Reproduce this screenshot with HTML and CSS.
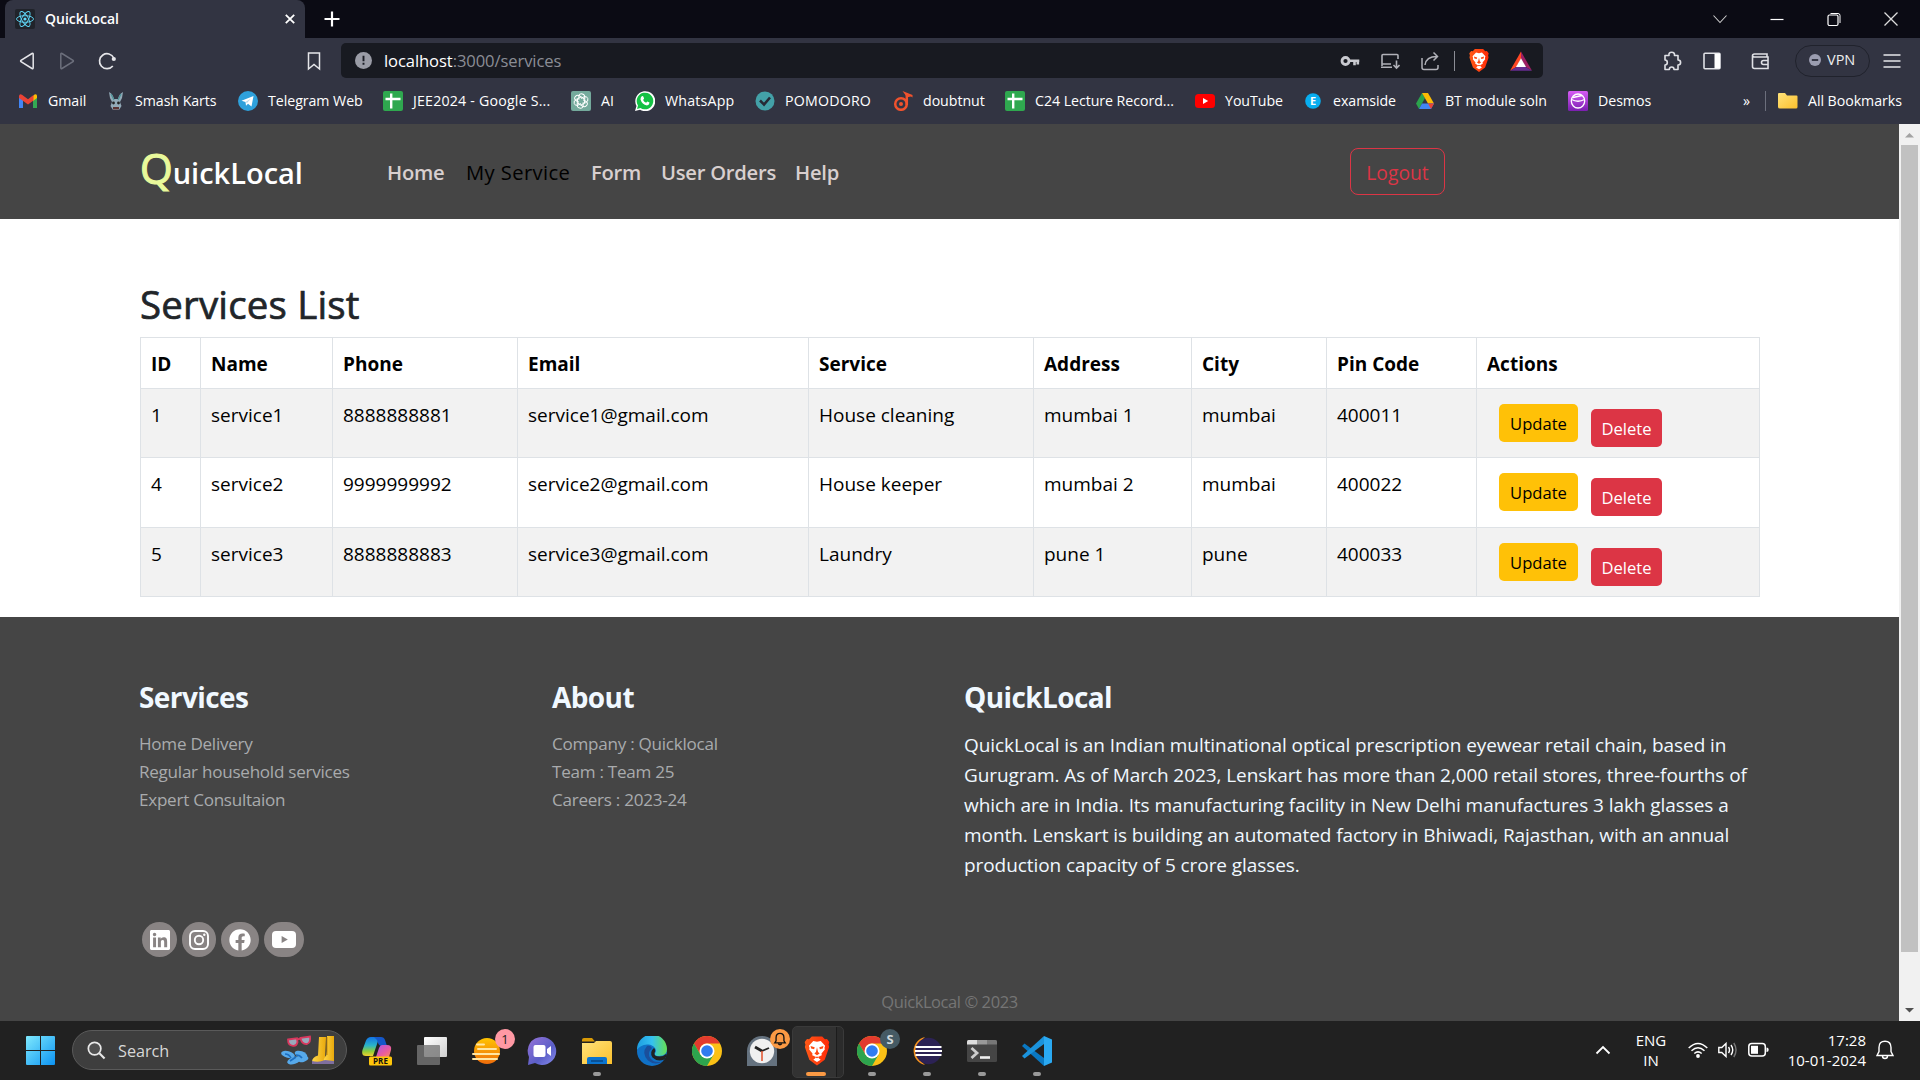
FILE: index.html
```html
<!DOCTYPE html>
<html lang="en">
<head>
<meta charset="utf-8">
<title>QuickLocal</title>
<link rel="stylesheet" href="styles.css">
</head>
<body>
<svg width="0" height="0" class="defs" aria-hidden="true">
  <defs>
    <linearGradient id="g-win" x1="0" y1="0" x2="1" y2="1"><stop offset="0" stop-color="#7fe9fd"/><stop offset="1" stop-color="#0c93f2"/></linearGradient>
    <linearGradient id="g-fold" x1="0" y1="0" x2="1" y2="1"><stop offset="0" stop-color="#ffe27a"/><stop offset="1" stop-color="#fbc02d"/></linearGradient>
    <linearGradient id="g-desmos" x1="0" y1="0" x2="0" y2="1"><stop offset="0" stop-color="#d75cf5"/><stop offset="1" stop-color="#7a1fb0"/></linearGradient>
    <linearGradient id="g-brave" x1="0" y1="0" x2="1" y2="0"><stop offset="0" stop-color="#ff5a18"/><stop offset="1" stop-color="#ff2a08"/></linearGradient>
    <linearGradient id="g-chat" x1="0" y1="0" x2="1" y2="1"><stop offset="0" stop-color="#9673d8"/><stop offset=".6" stop-color="#5b5fc7"/><stop offset="1" stop-color="#8a8ef0"/></linearGradient>
    <linearGradient id="g-sun" x1="0" y1="0" x2="0" y2="1"><stop offset="0" stop-color="#ffc400"/><stop offset="1" stop-color="#ee6c0b"/></linearGradient>
    <linearGradient id="g-edge" x1="0" y1="0" x2="1" y2="0"><stop offset="0" stop-color="#1d9de0"/><stop offset=".5" stop-color="#35c1f1"/><stop offset="1" stop-color="#66e052"/></linearGradient>
    <linearGradient id="g-cop1" x1="0" y1="0" x2="0" y2="1"><stop offset="0" stop-color="#1273e6"/><stop offset=".45" stop-color="#2bb4c8"/><stop offset=".75" stop-color="#8fce3a"/><stop offset="1" stop-color="#f3d130"/></linearGradient>
    <linearGradient id="g-cop2" x1="0" y1="0" x2="1" y2="1"><stop offset="0" stop-color="#a556ee"/><stop offset=".6" stop-color="#ea5c9c"/><stop offset="1" stop-color="#f98a5a"/></linearGradient>
    <linearGradient id="g-task" x1="0" y1="0" x2="1" y2="1"><stop offset="0" stop-color="#ffffff"/><stop offset="1" stop-color="#cfcfcf"/></linearGradient>
    <linearGradient id="g-boot" x1="0" y1="0" x2="1" y2="0"><stop offset="0" stop-color="#ffd84a"/><stop offset="1" stop-color="#e9a90c"/></linearGradient>
    <symbol id="i-sheet" viewBox="0 0 20 20"><rect width="20" height="20" rx="2" fill="#2fa84f"/><path d="M8.2 2.5v15M2.5 8h15" stroke="#fff" stroke-width="2.4" fill="none"/></symbol>
    <symbol id="i-chrome" viewBox="0 0 30 30">
      <circle cx="15" cy="15" r="15" fill="#fbc116"/>
      <path d="M1.900 7.700A15 15 0 0 1 28 7.500H15A7.500 7.500 0 0 0 8.300 11.600L8 17.500z" fill="#e33b2e"/>
      <path d="M2 7.500A15 15 0 0 0 15 30L21.500 18.800H8.500z" fill="#2da44e"/>
      <circle cx="15" cy="15" r="7.500" fill="#fff"/><circle cx="15" cy="15" r="5.800" fill="#2f7cf0"/>
    </symbol>
    <symbol id="i-brave" viewBox="0 0 24 28">
      <path d="M7 0h10l2.600 2.700 2-.3L24 5.500l-.9 2.200.6 2.500-4.300 12.200L12 28l-7.400-5.600L.3 10.200l.6-2.500L0 5.500l2.400-3.100 2 .3z" fill="url(#g-brave)"/>
      <path d="M12 5.200l3.600-.9 4.200 4.600-.6 2 .3 1.700-3.200 3.700.3 1.800-2.200 1-1.200 1.300 2.300 2L12 24.500 8.500 22.400l2.300-2-1.200-1.300-2.200-1 .3-1.800-3.200-3.700.3-1.700-.6-2 4.200-4.600z" fill="#fff"/>
      <path d="M5.800 9.200l4 1.200-.6 1.800-2.800-.6zM18.200 9.200l-4 1.200.6 1.800 2.800-.6zM12 10.500l1 4.500 1.500 1.500L12 18l-2.500-1.500L11 15zM9.500 19.500h5L12 21z" fill="#ff4a12"/>
    </symbol>
  </defs>
</svg>

<header class="tabstrip">
  <div class="tab">
    <svg class="fav" viewBox="0 0 20 20"><rect width="20" height="20" rx="2" fill="#20232a"/><g fill="none" stroke="#61dafb" stroke-width=".9"><ellipse cx="10" cy="10" rx="8.500" ry="3.300"/><ellipse cx="10" cy="10" rx="8.500" ry="3.300" transform="rotate(60 10 10)"/><ellipse cx="10" cy="10" rx="8.500" ry="3.300" transform="rotate(120 10 10)"/></g><circle cx="10" cy="10" r="1.600" fill="#61dafb"/></svg>
    <span class="tab-title">QuickLocal</span>
    <svg class="tab-close" viewBox="0 0 10 10"><path d="M.8.800l8.400 8.400M9.200.8.800 9.200" stroke="#fff" stroke-width="1.800"/></svg>
  </div>
  <svg class="new-tab" viewBox="0 0 16 16"><path d="M8 .5v15M.5 8h15" stroke="#fff" stroke-width="2.200"/></svg>
  <div class="win-controls">
    <svg viewBox="0 0 16 16"><path d="M1.500 4.500 8 11.500l6.500-7" fill="none" stroke="#ccc" stroke-width="1.100"/></svg>
    <svg viewBox="0 0 16 16"><path d="M1.500 8.500h13" stroke="#fff" stroke-width="1.200"/></svg>
    <svg viewBox="0 0 16 16"><rect x="2" y="4" width="10" height="10.500" rx="1.500" fill="none" stroke="#fff" stroke-width="1.200"/><path d="M4.500 2.500H12q2 0 2 2V12" fill="none" stroke="#fff"/></svg>
    <svg viewBox="0 0 16 16"><path d="M1.500 1.500l13 13M14.500 1.500l-13 13" stroke="#ddd" stroke-width="1.300"/></svg>
  </div>
</header>

<nav class="toolbar">
  <svg class="tb" viewBox="0 0 20 20"><path d="M15 2.500q1.200-.6 1.200.9v13.200q0 1.500-1.200.9L4 10.700q-.8-.7 0-1.400z" fill="none" stroke="#e6e6ea" stroke-width="1.500"/></svg>
  <svg class="tb" viewBox="0 0 20 20"><path d="M5 2.500q-1.200-.6-1.200.9v13.200q0 1.500 1.200.9L16 10.700q.8-.7 0-1.400z" fill="none" stroke="#6c6f7c" stroke-width="1.500"/></svg>
  <svg class="tb" viewBox="0 0 20 20"><path d="M15.800 15A7.500 7.500 0 1 1 16.800 7" fill="none" stroke="#e6e6ea" stroke-width="1.700"/><circle cx="16.800" cy="8" r="2.100" fill="#e6e6ea"/></svg>
  <svg class="tb save" viewBox="0 0 20 20"><path d="M4.500 2h11v16L10 13.500 4.500 18z" fill="none" stroke="#e6e6ea" stroke-width="1.500"/></svg>
  <div class="urlbar">
    <svg class="info" viewBox="0 0 17 17"><circle cx="8.500" cy="8.500" r="8.500" fill="#9a9ca6"/><path d="M8.500 3.800v5.400M8.500 10.800v2" stroke="#1a1c24" stroke-width="1.900"/></svg>
    <span class="url"><b>localhost</b>:3000/services</span>
    <svg class="u" viewBox="0 0 20 20"><circle cx="5.500" cy="10" r="3.500" fill="none" stroke="#c9cad0" stroke-width="2.800"/><path d="M9 9.800h10.300M14.500 10v4.200M17.800 10v3.500" stroke="#c9cad0" stroke-width="2.600"/></svg>
    <svg class="u" viewBox="0 0 20 20"><path d="M18 8V4.500q0-1-1-1H3q-1 0-1 1v10.500M1 16.300h11M2 13h9" fill="none" stroke="#b0b1b8" stroke-width="1.600"/><path d="M16.500 9.500v7M13.500 14l3 3 3-3" fill="none" stroke="#b0b1b8" stroke-width="1.600"/></svg>
    <svg class="u" viewBox="0 0 20 20"><path d="M2 7v9.500q0 2 2 2h12q2 0 2-2V14M5 14q1-8.500 12-8.500M13.500 1.500l4 4-4 4" fill="none" stroke="#b0b1b8" stroke-width="1.500"/></svg>
    <i class="vsep"></i>
    <svg class="lion" viewBox="0 0 24 28"><use href="#i-brave"/></svg>
    <svg class="bat" viewBox="0 0 24 21"><path d="M12 0 0 21l7-4L12 8z" fill="#ff4724"/><path d="M12 0l12 21-7-4-5-9z" fill="#9e1f63"/><path d="M0 21h24l-7-4H7z" fill="#662d91"/><path d="M12 7.500 17.500 17h-11z" fill="#fff"/></svg>
  </div>
  <svg class="tb puzzle" viewBox="0 0 20 20"><path d="M3 4.500h4q-.5-3.200 2.700-3.200T12.500 4.500H16V9q2.600 0 2.600 2.500T16 14v4.500h-4q0-2.500-2.300-2.500T7.300 18.500H3V14q2.300 0 2.300-2.500T3 9z" fill="none" stroke="#dfe0e5" stroke-width="1.600" stroke-linejoin="round"/></svg>
  <svg class="tb side" viewBox="0 0 20 20"><rect x="2" y="2.300" width="16" height="15.400" rx="1" fill="none" stroke="#dfe0e5" stroke-width="1.600"/><path d="M12.500 2.500H18v15h-5.500z" fill="#fff"/></svg>
  <svg class="tb wallet" viewBox="0 0 20 20"><path d="M17 6V3H4.500Q2.500 3 2.500 4.700V15.500q0 2 2 2H18V6H4.500q-2 0-2-1.500M18 9.500h-4.500q-2 0-2 2t2 2H18" fill="none" stroke="#dfe0e5" stroke-width="1.600"/></svg>
  <div class="vpn"><svg viewBox="0 0 12 12"><circle cx="6" cy="6" r="6" fill="#9b9db0"/><path d="M2.800 6h6.400" stroke="#2b2d3a" stroke-width="1.800"/></svg><span>VPN</span></div>
  <svg class="tb menu" viewBox="0 0 20 20"><path d="M1.500 4h17M1.500 10h17M1.500 16h17" stroke="#e6e6ea" stroke-width="1.500"/></svg>
</nav>

<nav class="bookmarks">
  <a><svg viewBox="0 0 20 20"><path d="M1 4.500V17h4V8.500z" fill="#4285f4"/><path d="M19 4.500V17h-4V8.500z" fill="#34a853"/><path d="M15 5v5l4-3V5q0-2.500-2.500-1.500z" fill="#fbbc04"/><path d="M1 5q.5-2.500 3-1.200l6 4.500 5.500-4.300v5.500L10 13.500 1 7z" fill="#ea4335"/></svg><span>Gmail</span></a>
  <a><svg viewBox="0 0 20 20"><path d="M3 1q4 2 5 7h4q1-5 5-7l-1 6-2 4 1.500 4-2.500 4H7l-2.500-4L6 11 4 7z" fill="#93aab8"/><path d="M5 3l3 6M15 3l-3 6" stroke="#4c9399" stroke-width="1.200"/><circle cx="7.500" cy="12" r="1.400" fill="#222"/><circle cx="12.500" cy="12" r="1.400" fill="#222"/><path d="M7 16h6v2.500H7z" fill="#5b3434"/></svg><span>Smash Karts</span></a>
  <a><svg viewBox="0 0 20 20"><circle cx="10" cy="10" r="10" fill="#2ea1dc"/><path d="M3.500 9.800 15.500 5l-2 10.500-3.500-2.700-2 2L7.500 11z" fill="#fff"/><path d="M7.500 11 13 7.500 9 12z" fill="#b9d9ea"/></svg><span>Telegram Web</span></a>
  <a class="wide"><svg viewBox="0 0 20 20"><use href="#i-sheet"/></svg><span>JEE2024 - Google S...</span></a>
  <a><svg viewBox="0 0 20 20"><rect width="20" height="20" rx="2" fill="#74aa9c"/><g fill="none" stroke="#fff" stroke-width="1"><path id="petal" d="M10 7.500 13 5.800q3-1 3.800 1.800t-2 4L10 14"/><use href="#petal" transform="rotate(60 10 10)"/><use href="#petal" transform="rotate(120 10 10)"/><use href="#petal" transform="rotate(180 10 10)"/><use href="#petal" transform="rotate(240 10 10)"/><use href="#petal" transform="rotate(300 10 10)"/></g></svg><span>AI</span></a>
  <a class="wide"><svg viewBox="0 0 20 20"><path d="M0 20l1.500-5A10 10 0 1 1 5 18.700z" fill="#fff"/><path d="M2 18l1-3.500A8.300 8.300 0 1 1 5.500 17z" fill="#14c144"/><path d="M6.500 5.500q1.500-1 2 .5l.6 1.500-1 1.500q1 2 3 2.800l1.200-1.200 2.200 1q0 2.500-2.500 2.800Q7 13.500 5.500 8.500 5.500 6.500 6.500 5.500z" fill="#fff"/></svg><span>WhatsApp</span></a>
  <a class="wide"><svg viewBox="0 0 20 20"><circle cx="10" cy="10" r="9.500" fill="#43a1a8"/><path d="M5 9.500l4 4 6-7" fill="none" stroke="#262a36" stroke-width="2.600"/></svg><span>POMODORO</span></a>
  <a><svg viewBox="0 0 20 20"><circle cx="8" cy="13" r="5.800" fill="none" stroke="#f0522d" stroke-width="2.500"/><circle cx="8" cy="13" r="2" fill="#f0522d"/><path d="M13.800 14V2.500" stroke="#f0522d" stroke-width="2.500"/><path d="M9.500 0l10 4v2.500l-1.500-1-4 .8z" fill="#f0522d"/></svg><span>doubtnut</span></a>
  <a><svg viewBox="0 0 20 20"><use href="#i-sheet"/></svg><span>C24 Lecture Record...</span></a>
  <a><svg viewBox="0 0 20 20"><rect y="3" width="20" height="14" rx="3.500" fill="#f00"/><path d="M8 7l5.200 3L8 13z" fill="#fff"/></svg><span>YouTube</span></a>
  <a><svg viewBox="0 0 20 20"><circle cx="10" cy="10" r="7.800" fill="#08aef0"/><text x="10" y="14" text-anchor="middle" class="ic-e">E</text></svg><span>examside</span></a>
  <a><svg viewBox="0 0 20 20"><path d="M7 2 1 12.500 4 18l6-11z" fill="#2ba24c"/><path d="M7 2h6l6 10.500h-6z" fill="#fbbc04"/><path d="M4 18h12l3-5.500H7z" fill="#4285f4"/><path d="M16 18l3-5.500h-6z" fill="#ea4335"/></svg><span>BT module soln</span></a>
  <a><svg viewBox="0 0 20 20"><rect width="20" height="20" rx="1.500" fill="url(#g-desmos)"/><g fill="none" stroke="#fff" stroke-width="1.300"><ellipse cx="10" cy="10" rx="6.700" ry="7"/><path d="M3.500 8.500q6.500 3.500 13 0M5 6.500 14 4.500"/></g></svg><span>Desmos</span></a>
  <em class="more">»</em>
  <a class="all"><svg viewBox="0 0 20 20"><path d="M0 3q0-1 1-1h6l2 2.500h9.500q1 0 1 1V16q0 1.500-1.500 1.500H2Q0 17.500 0 16z" fill="url(#g-fold)"/></svg><span>All Bookmarks</span></a>
</nav>

<div class="viewport">
  <div class="page">
    <header class="site-head">
      <a class="logo"><b>Q</b>uickLocal</a>
      <nav class="links"><a>Home</a><a class="active">My Service</a><a>Form</a><a>User Orders</a><a>Help</a></nav>
      <button class="logout">Logout</button>
    </header>
    <main class="content">
      <h1>Services List</h1>
      <table>
        <colgroup><col class="c1"><col class="c2"><col class="c3"><col class="c4"><col class="c5"><col class="c6"><col class="c7"><col class="c8"><col class="c9"></colgroup>
        <thead><tr><th>ID</th><th>Name</th><th>Phone</th><th>Email</th><th>Service</th><th>Address</th><th>City</th><th>Pin Code</th><th>Actions</th></tr></thead>
        <tbody>
          <tr><td>1</td><td>service1</td><td>8888888881</td><td>service1@gmail.com</td><td>House cleaning</td><td>mumbai 1</td><td>mumbai</td><td>400011</td><td><div class="acts"><button class="upd">Update</button><button class="del">Delete</button></div></td></tr>
          <tr><td>4</td><td>service2</td><td>9999999992</td><td>service2@gmail.com</td><td>House keeper</td><td>mumbai 2</td><td>mumbai</td><td>400022</td><td><div class="acts"><button class="upd">Update</button><button class="del">Delete</button></div></td></tr>
          <tr><td>5</td><td>service3</td><td>8888888883</td><td>service3@gmail.com</td><td>Laundry</td><td>pune 1</td><td>pune</td><td>400033</td><td><div class="acts"><button class="upd">Update</button><button class="del">Delete</button></div></td></tr>
        </tbody>
      </table>
    </main>
    <footer class="site-foot">
      <div class="cols">
        <section><h3>Services</h3><ul><li>Home Delivery</li><li>Regular household services</li><li>Expert Consultaion</li></ul></section>
        <section><h3>About</h3><ul><li>Company : Quicklocal</li><li>Team : Team 25</li><li>Careers : 2023-24</li></ul></section>
        <section><h3>QuickLocal</h3><p>QuickLocal is an Indian multinational optical prescription eyewear retail chain, based in<br>Gurugram. As of March 2023, Lenskart has more than 2,000 retail stores, three-fourths of<br>which are in India. Its manufacturing facility in New Delhi manufactures 3 lakh glasses a<br>month. Lenskart is building an automated factory in Bhiwadi, Rajasthan, with an annual<br>production capacity of 5 crore glasses.</p></section>
      </div>
      <div class="social">
        <a class="s1"><svg viewBox="0 32 448 448"><path fill="#fff" d="M416 32H31.900C14.300 32 0 46.500 0 64.300v383.400C0 465.500 14.300 480 31.900 480H416c17.600 0 32-14.500 32-32.300V64.300c0-17.800-14.400-32.300-32-32.300zM135.400 416H69V202.200h66.500V416zm-33.200-243c-21.300 0-38.500-17.300-38.500-38.500S80.900 96 102.200 96c21.200 0 38.500 17.300 38.500 38.500 0 21.300-17.200 38.500-38.500 38.500zm282.100 243h-66.400V312c0-24.800-.5-56.700-34.500-56.700-34.600 0-39.900 27-39.900 54.900V416h-66.400V202.200h63.700v29.200h.9c8.900-16.800 30.600-34.500 62.900-34.500 67.200 0 79.700 44.300 79.700 101.900V416z"/></svg></a>
        <a class="s2"><svg viewBox="0 0 20 20"><rect x="1" y="1" width="18" height="18" rx="5" fill="none" stroke="#fff" stroke-width="1.900"/><circle cx="10" cy="10" r="4.200" fill="none" stroke="#fff" stroke-width="1.900"/><circle cx="15.300" cy="4.800" r="1.200" fill="#fff"/></svg></a>
        <a class="s3"><svg viewBox="0 0 512 512"><path fill="#fff" d="M504 256C504 119 393 8 256 8S8 119 8 256c0 123.800 90.700 226.400 209.200 245V327.700h-63V256h63v-54.600c0-62.200 37-96.500 93.700-96.500 27.100 0 55.500 4.800 55.500 4.800v61h-31.300c-30.800 0-40.400 19.100-40.400 38.700V256h68.800l-11 71.700h-57.800V501C413.300 482.400 504 379.800 504 256z"/></svg></a>
        <a class="s4"><svg viewBox="0 0 24 17"><rect width="24" height="17" rx="4" fill="#fff"/><path d="M9.600 5l6.200 3.500L9.600 12z" fill="#898484"/></svg></a>
      </div>
      <div class="copy">QuickLocal © 2023</div>
    </footer>
  </div>
  <div class="scroll">
    <svg viewBox="0 0 21 21"><path d="M6 13.500h9L10.500 9z" fill="#a3a3a3"/></svg>
    <i class="thumb"></i>
    <svg viewBox="0 0 21 21"><path d="M6 8h9l-4.500 4.500z" fill="#505050"/></svg>
  </div>
</div>

<footer class="taskbar">
  <svg class="start" viewBox="0 0 29 29"><path d="M0 1q0-1 1-1h13v14H0zM15 0h13q1 0 1 1v13H15zM0 15h14v14H1q-1 0-1-1zM15 15h14v13q0 1-1 1H15z" fill="url(#g-win)"/></svg>
  <div class="search">
    <svg class="mag" viewBox="0 0 20 20"><circle cx="8" cy="8" r="6.600" fill="#505050" stroke="#e8e8e8" stroke-width="1.800"/><path d="M13 13l5.500 5.500" stroke="#e8e8e8" stroke-width="2.200"/></svg>
    <span>Search</span>
    <svg class="art" viewBox="0 0 54 30">
      <g stroke="#d9385e" stroke-width="1.800"><path d="M7 4.500l9-1.200.5 4q-1 4-4.500 3.500Q7 10.500 7 4.500zM19.500 2.800 29 1.500q1 6-3 7.500-5.500.5-6.500-6.200z" fill="#9aa9bb"/><path d="M15.500 4.500 20 3.700" /></g>
      <g fill="#57a9ea"><ellipse cx="7" cy="19.500" rx="7" ry="3.300" transform="rotate(14 7 19.500)"/><ellipse cx="20" cy="19.500" rx="6.500" ry="3.300" transform="rotate(18 20 19.500)"/><ellipse cx="13" cy="25.500" rx="7" ry="3.500" transform="rotate(-18 13 25.500)"/><ellipse cx="22" cy="24" rx="5.500" ry="3" transform="rotate(-14 22 24)"/></g>
      <path d="M4 19q4 0 6 4M15 20q4 0 6 3M9 26l6-4" stroke="#1c6ec0" stroke-width="1.600" fill="none"/>
      <path d="M38 2h7l-1 23q-6 4-13 2 0-5 6-6.500z" fill="url(#g-boot)"/><path d="M46 1h7v26h-9q-3 0 0-5 2-2 2-6z" fill="url(#g-boot)"/><path d="M31 26q7 2 13-1l9 1v3H31z" fill="#7f6f9f"/><path d="M46 2v18" stroke="#c98a05"/>
    </svg>
  </div>
  <div class="apps">
    <a><svg viewBox="0 0 30 30"><path d="M9 1h10l-3 4-5 15H4Q-1 20 .5 14L4 4.500Q5.500 1 9 1z" fill="url(#g-cop1)"/><path d="M12 1h7q3 0 4 3l2 6h-5q-3 0-4-3-1-4-4-6z" fill="#1557c8"/><path d="M20 9h5q5 0 4 5l-2 7H14l3-9q1-3 3-3z" fill="url(#g-cop2)"/><rect x="7" y="20.500" width="23" height="9" rx="1.500" fill="#ffc60a"/><text x="18.500" y="28" text-anchor="middle" class="ic-pre">PRE</text></svg></a>
    <a><svg viewBox="0 0 30 30"><rect x="7" y="1" width="23" height="20" rx="1" fill="url(#g-task)"/><rect x="0" y="9" width="23" height="20" rx="1" fill="#777" fill-opacity=".8"/></svg></a>
    <a><svg viewBox="0 0 30 30"><circle cx="15" cy="15" r="13" fill="url(#g-sun)"/><path d="M5 8.500h7M6 13h18M1 18h14M10 18h17M1 23h24" stroke="#ffe6a3" stroke-width="2" stroke-linecap="round"/></svg><b class="badge pink">1</b></a>
    <a><svg viewBox="0 0 30 30"><path d="M15 1a14 14 0 1 1-7 26L1 29l1-8A14 14 0 0 1 15 1z" fill="url(#g-chat)"/><rect x="6.500" y="9" width="12" height="12" rx="2" fill="#fff"/><path d="M20 13l4-3v10l-4-3z" fill="#fff"/></svg></a>
    <a><svg viewBox="0 0 30 30"><path d="M0 4q0-2 2-2h8l3 3.500H0z" fill="#d99a06"/><path d="M0 7h12l2-2h14q2 0 2 2v21H0z" fill="url(#g-fold)"/><path d="M5 28v-5q0-2 2-2h16q2 0 2 2v5z" fill="#0b74cf"/><path d="M9 25h12" stroke="#08427e" stroke-width="1.400"/></svg><i class="dot"></i></a>
    <a><svg viewBox="0 0 30 30"><circle cx="15" cy="15" r="15" fill="#1071c6"/><path d="M0 14A15 15 0 0 1 30 13q0 7-8 7-5 0-4-3 2-2 0-5-3-4-8-3.500Q3 9 0 14z" fill="url(#g-edge)"/><path d="M10 10q-6 7 1 14.500Q18 30 25.500 25.500q-8 2-12-3T15 12q-2-3-5-2z" fill="#1a4f9c"/><path d="M17 12q2 2 .5 5-.8 3.500 5 3.500 4 0 6.500-2.500l1 1-2.500 4.500Q20 26 15.500 21.500 12 16 17 12z" fill="#212121"/></svg></a>
    <a><svg viewBox="0 0 30 30"><use href="#i-chrome"/></svg></a>
    <a><svg viewBox="0 0 30 30"><path d="M0 30V15A15 15 0 0 1 30 15v15z" fill="#65727f"/><circle cx="15" cy="15" r="12.200" fill="#f0f0f0"/><path d="M15 15 8 11" stroke="#222" stroke-width="2.800"/><path d="M15 15l7-3" stroke="#222" stroke-width="1.800"/><path d="M15 15v10" stroke="#e2502a" stroke-width="1.500"/></svg><b class="badge orange"><svg viewBox="0 0 16 16"><path d="M8 1.500q4.500 0 4.500 5V10l1.500 2.500H2L3.500 10V6.500q0-5 4.500-5zM6 13.500q2 2 4 0" fill="none" stroke="#111" stroke-width="1.500"/></svg></b></a>
    <a class="on"><svg viewBox="0 0 30 30"><use href="#i-brave" x="2.500" y="0" width="25" height="30"/></svg><i class="dot wide"></i></a>
    <a><svg viewBox="0 0 30 30"><use href="#i-chrome"/></svg><b class="badge slate">S</b><i class="dot"></i></a>
    <a><svg viewBox="0 0 30 30"><path d="M13 1A14.300 14.300 0 0 0 13 29L8 24Q3 15 8 6z" fill="#f7941e"/><circle cx="16.500" cy="15" r="13.200" fill="#2c2255"/><path d="M3.500 11h26M3 15h27M3.500 19h26" stroke="#fff" stroke-width="2"/></svg><i class="dot"></i></a>
    <a><svg viewBox="0 0 30 30"><rect y="4" width="30" height="22" rx="1.500" fill="#454545"/><path d="M0 8.500V5.500Q0 4 1.500 4H10v4.500z" fill="#ddd"/><path d="M10 4h10v4.500H10z" fill="#999"/><path d="M20 4h8.500Q30 4 30 5.500v3H20z" fill="#777"/><path d="M4.500 12l5.500 5-5.500 5" fill="none" stroke="#ccc" stroke-width="2.800"/><path d="M13 21.500h10" stroke="#f0f0f0" stroke-width="2.600"/></svg><i class="dot"></i></a>
    <a><svg viewBox="0 0 30 30"><path d="M0 10l2.500-2.500L22 22v8z" fill="#0a78c2"/><path d="M0 20l2.500 2.500L22 8V0z" fill="#1b93dc"/><path d="M22 0l8 3.500v23L22 30z" fill="#2aa9f2"/></svg><i class="dot"></i></a>
  </div>
  <div class="tray">
    <svg class="up" viewBox="0 0 16 16"><path d="M1.500 11.500 8 5l6.500 6.500" fill="none" stroke="#fff" stroke-width="1.800"/></svg>
    <div class="lang">ENG<br>IN</div>
    <svg class="wifi" viewBox="0 0 20 16"><g fill="none" stroke="#fff" stroke-width="1.500"><path d="M.7 6Q10-3 19.300 6M3.500 8.800q6.500-6 13 0M6.300 11.500q3.700-3.300 7.400 0"/></g><circle cx="10" cy="14" r="1.900" fill="#fff"/></svg>
    <svg class="vol" viewBox="0 0 20 16"><g fill="none" stroke="#fff" stroke-width="1.400"><path d="M.8 5.500h3L8 1.500v13L3.800 10.500h-3zM10.500 5q2 3 0 6M13 3q3.500 5 0 10"/><path d="M15.800 1q4.500 7 0 14" stroke="#777"/></g></svg>
    <svg class="batt" viewBox="0 0 21 16"><rect x=".8" y="1.500" width="16.500" height="12.500" rx="3" fill="none" stroke="#fff" stroke-width="1.500"/><rect x="3" y="3.800" width="7" height="8" fill="#fff"/><path d="M18.500 5.500q2.200 0 2.200 2.300t-2.200 2.300z" fill="#fff"/></svg>
    <div class="clock">17:28<br>10-01-2024</div>
    <svg class="bell" viewBox="0 0 18 20"><path d="M9 1.200q6 0 6 6.300v4L17 15.500H1l2-4v-4Q3 1.200 9 1.200zM6.500 16q0 2.500 2.500 2.500t2.500-2.500" fill="none" stroke="#fff" stroke-width="1.400"/></svg>
  </div>
</footer>
</body>
</html>
```
FILE: styles.css
```css
* { box-sizing: border-box; }
html, body { margin: 0; height: 1080px; overflow: hidden; }
body { display: flex; flex-direction: column; width: 1920px; font-family: "Open Sans", "Noto Sans", sans-serif; background: #fff; }
svg { display: block; flex: none; }
button { font-family: inherit; border: 0; padding: 0; margin: 0; }
.defs { position: absolute; }

.tabstrip { height: 38px; background: #0b0b14; display: flex; align-items: center; padding-left: 5px; flex: none; }
.tab { width: 300px; height: 38px; background: #323442; border-radius: 8px 8px 0 0; display: flex; align-items: center; padding: 0 10px; }
.fav { width: 20px; height: 20px; }
.tab-title { color: #fff; font-size: 14px; font-weight: 600; margin-left: 10px; flex: 1; white-space: nowrap; line-height: 20px; margin-top: -1px; }
.tab-close { width: 10px; height: 10px; }
.new-tab { width: 16px; height: 16px; margin-left: 19px; }
.win-controls { margin-left: auto; display: flex; gap: 41px; padding-right: 21px; }
.win-controls svg { width: 16px; height: 16px; }

.toolbar { height: 45px; background: #323442; display: flex; align-items: center; padding-left: 17px; flex: none; }
.tb { width: 20px; height: 20px; margin-right: 20px; }
.save { margin-left: 167px; margin-right: 17px; }
.urlbar { width: 1202px; height: 35px; border-radius: 5px; background: #181a21; display: flex; align-items: center; padding: 0 11px 0 14px; }
.info { width: 17px; height: 17px; }
.url { margin-left: 12px; font-size: 16.6px; letter-spacing: -.1px; color: #8b8d95; flex: 1; white-space: nowrap; }
.url b { font-weight: 400; color: #fff; }
.u { width: 20px; height: 20px; margin-right: 20px; }
.vsep { width: 1px; height: 20px; background: #8b8d95; margin: 0 14px 0 -6px; }
.lion { width: 20px; height: 23px; margin-right: 21px; }
.bat { width: 22px; height: 20px; }
.puzzle { margin: 0 20px 0 119px; }
.side { margin-right: 28px; }
.wallet { margin-right: 25px; }
.vpn { width: 75px; height: 32px; border: 1px solid #20222c; border-radius: 16px; display: flex; align-items: center; gap: 6px; padding: 0 0 2px 13px; color: #eee; font-size: 14.5px; }
.vpn svg { width: 12px; height: 12px; }
.menu { margin: 0 0 0 12px; }

.bookmarks { height: 41px; background: #323442; display: grid; grid-template-columns: 88px 132px 145px 188px 64px 120px 138px 112px 190px 108px 112px 153px 168px 29px 144px; padding: 0 0 5px 18px; align-items: center; flex: none; color: #fff; font-size: 14.2px; letter-spacing: -.05px; white-space: nowrap; }
.bookmarks a { display: flex; align-items: center; gap: 10px; }
.bookmarks a:nth-child(2) { gap: 9px; }
.bookmarks .wide { letter-spacing: .2px; }
.bookmarks a > svg { width: 20px; height: 20px; }
.bookmarks a span { line-height: 20px; }
.more { font-style: normal; margin: -2px 0 0 7px; }
.all { border-left: 1px solid #6c6f7c; padding-left: 12px; height: 20px; }
.ic-e { font: bold 11px "Open Sans", sans-serif; fill: #fff; }

.viewport { height: 897px; display: flex; flex: none; }
.page { width: 1899px; background: #fff; display: flex; flex-direction: column; }
.scroll { width: 21px; background: #f1f1f1; display: flex; flex-direction: column; align-items: center; }
.scroll svg { width: 21px; height: 21px; }
.thumb { width: 17px; height: 807px; background: #c1c1c1; margin-bottom: auto; }

.site-head { height: 95px; background: #454545; display: flex; align-items: center; padding-left: 140px; flex: none; }
.logo { width: 247px; color: #fff; font-size: 29px; font-weight: 600; white-space: nowrap; line-height: 60px; margin-top: -3px; }
.logo b { font-size: 42px; font-weight: 400; color: #e9f99b; -webkit-text-stroke: 1.2px #e9f99b; }
.links { display: grid; grid-template-columns: 79px 125px 70px 134px 555px; font-size: 20.2px; font-weight: 600; letter-spacing: -.25px; color: #d8cfcf; white-space: nowrap; }
.links .active { color: #000; font-weight: 400; letter-spacing: .4px; }
.logout { width: 95px; height: 47px; border: 1px solid #dc3545; border-radius: 8px; background: none; color: #dc3545; font-size: 19.3px; padding-top: 2px; }

.content { height: 398px; padding: 61px 139px 0 140px; flex: none; }
h1 { margin: 0 0 9px; font-size: 38.4px; letter-spacing: .2px; line-height: 48px; font-weight: 400; -webkit-text-stroke: .7px #212529; color: #212529; white-space: nowrap; }
table { width: 1620px; table-layout: fixed; border-collapse: collapse; font-size: 19px; line-height: 30px; color: #000; }
.c1 { width: 60px; } .c2 { width: 132px; } .c3 { width: 185px; } .c4 { width: 291px; } .c5 { width: 225px; } .c6 { width: 158px; } .c7 { width: 135px; } .c8 { width: 150px; } .c9 { width: 283px; }
th, td { border: 1px solid #dee2e6; padding: 11px 10px 0; text-align: left; vertical-align: top; font-weight: 400; white-space: nowrap; }
th { font-weight: 700; height: 51px; }
td { height: 69px; }
tbody tr:nth-child(2) td { height: 70px; padding-top: 11px; }
tbody tr:nth-child(odd) { background: #f2f2f2; }
.acts { display: flex; gap: 13px; padding: 4px 0 0 12px; height: 47px; }
.acts button { height: 38px; border-radius: 5px; font-size: 16.6px; }
.upd { width: 79px; background: #ffc107; color: #000; }
.del { width: 71px; background: #dc3545; color: #fff; margin-top: 5px; }

.site-foot { height: 404px; background: #454545; padding: 61px 139px 0; color: #f0f8ff; }
.cols { display: grid; grid-template-columns: 413px 412px 1fr; height: 244px; }
h3 { margin: 0; font-size: 28px; letter-spacing: -.6px; line-height: 39px; font-weight: 700; }
ul { list-style: none; margin: 0; padding: 13px 0 0; font-size: 17.100px; letter-spacing: -.27px; line-height: 28px; color: #a9abad; }
p { margin: 0; padding-top: 13px; font-size: 19px; letter-spacing: -.07px; line-height: 30px; white-space: nowrap; }
.social { display: flex; gap: 5px; padding-left: 3px; }
.social a { height: 35px; border-radius: 18px; background: #898484; display: flex; align-items: center; justify-content: center; }
.s1 { width: 35px; } .s2 { width: 34px; } .s3 { width: 38px; } .s4 { width: 40px; }
.s1 svg, .s2 svg { width: 20px; height: 20px; }
.s3 svg { width: 22px; height: 22px; }
.s4 svg { width: 24px; height: 17px; }
.copy { text-align: center; padding-top: 31px; font-size: 16.500px; letter-spacing: -.42px; line-height: 28px; color: #757575; }

.taskbar { height: 59px; background: #212121; display: flex; align-items: center; padding-left: 26px; flex: none; color: #fff; }
.start { width: 29px; height: 29px; }
.search { width: 275px; height: 40px; margin: -1px 2px 0 17px; border: 1px solid #5a5a5a; border-radius: 20px; background: #3e3e3e; display: flex; align-items: center; padding: 0 11px 0 14px; }
.mag { width: 19px; height: 19px; }
.search span { flex: 1; margin-left: 12px; padding-top: 1px; font-size: 16.200px; color: #d8d8d8; }
.art { width: 54px; height: 30px; }
.apps { display: grid; grid-template-columns: repeat(13, 55px); }
.apps a { height: 50px; position: relative; display: flex; align-items: center; justify-content: center; }
.apps a > svg { width: 30px; height: 30px; }
.badge { position: absolute; left: 36px; top: 3px; width: 20px; height: 20px; border-radius: 10px; font-size: 13px; font-weight: 400; line-height: 20px; text-align: center; color: #222; display: flex; align-items: center; justify-content: center; }
.badge svg { width: 14px; height: 14px; }
.pink { background: #ff99a4; }
.orange { background: #fb9a44; }
.slate { background: #455a64; color: #cfd8dc; font-weight: 700; }
.dot { position: absolute; left: 23.500px; bottom: 0; width: 8px; height: 4px; border-radius: 2px; background: #999; }
.dot.wide { left: 17px; width: 20px; background: #fb9a44; }
.apps .on::before { content: ""; position: absolute; left: 3px; top: 0; width: 50px; height: 50px; border-radius: 5px; background: linear-gradient(90deg, #323232 43px, #1c1c1c 43px, #1c1c1c 44px, #2b2b2b 44px); border: 1px solid #3a3a3a; }
.on svg { position: relative; }
.ic-pre { font: bold 8px "Open Sans", sans-serif; fill: #111; }
.tray { margin-left: auto; display: flex; align-items: center; padding: 0 26px 2px 0; font-size: 15px; line-height: 20px; white-space: nowrap; }
.up { width: 16px; height: 16px; }
.lang { width: 40px; margin: 0 17px 0 20px; text-align: center; }
.wifi { width: 20px; height: 16px; margin-right: 10px; }
.vol { width: 20px; height: 16px; margin-right: 10px; }
.batt { width: 21px; height: 16px; }
.clock { width: 97px; text-align: right; margin-right: 10px; }
.bell { width: 18px; height: 20px; }
```
